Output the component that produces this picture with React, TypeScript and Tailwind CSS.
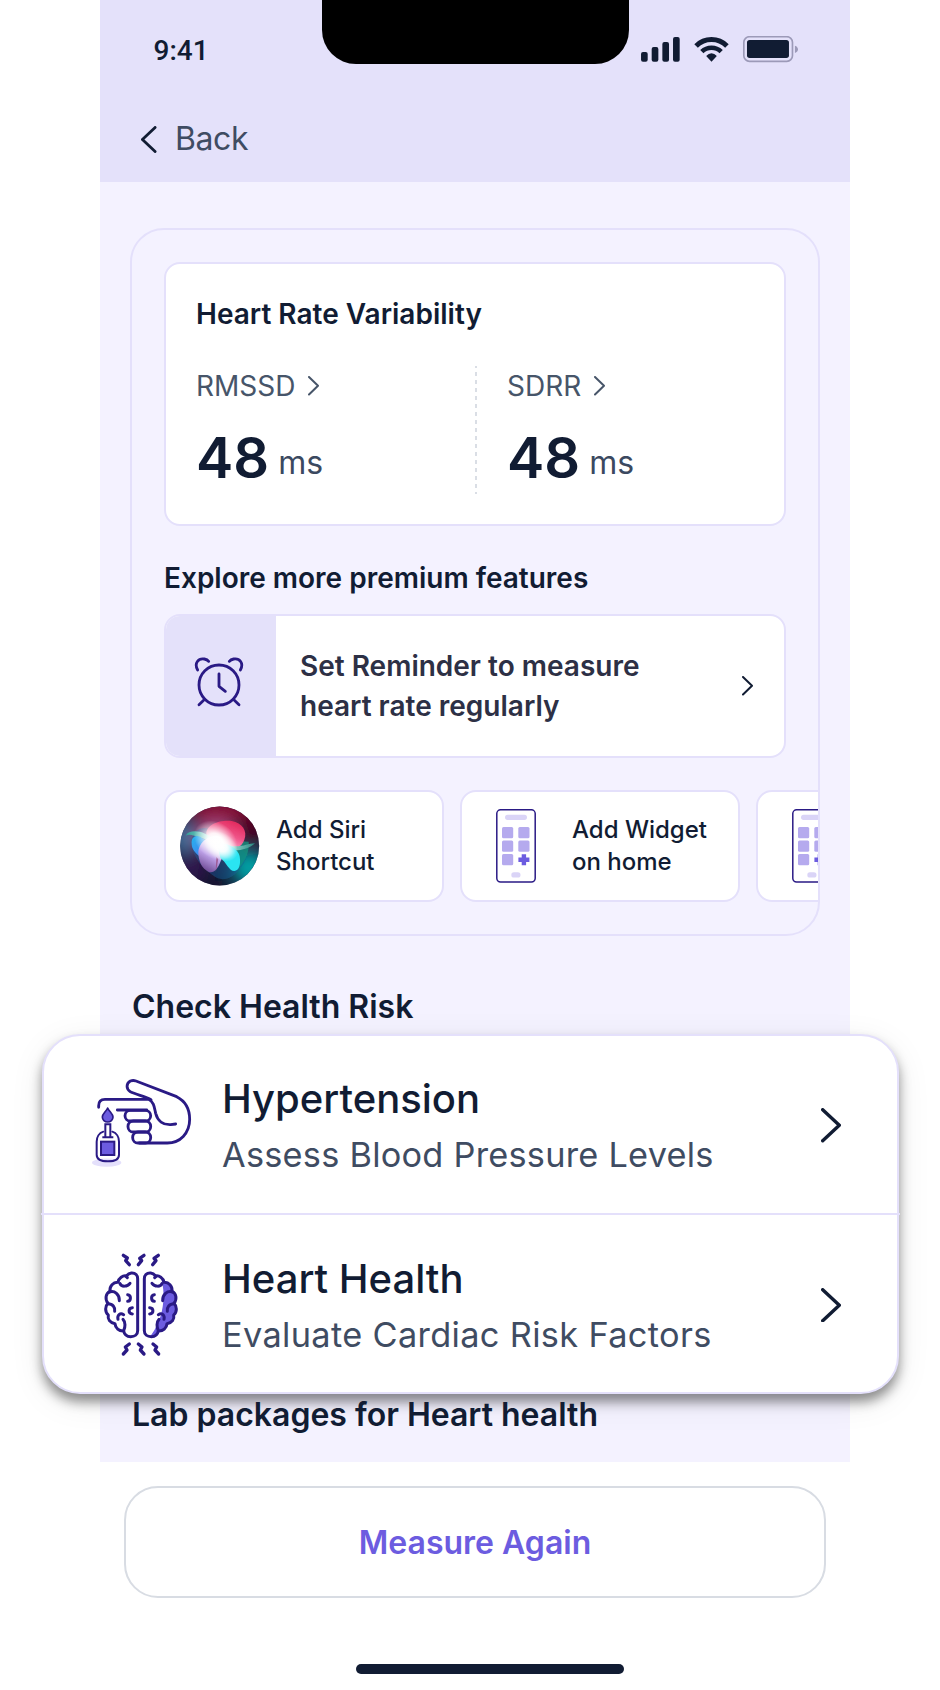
import React from "react";

const INK = "#111c33";
const INDIGO = "#2a1a85";
const VIOLET = "#6c5ce0";

function StatusIcons() {
  return (
    <svg width="157.33" height="26.67" viewBox="423 108 472 80" className="mt-9 ml-[11.5px] shrink-0">
      <g fill={INK}>
        <rect x="423" y="156" width="20" height="29" rx="6" />
        <rect x="455" y="141" width="20" height="44" rx="6" />
        <rect x="487" y="126" width="20" height="59" rx="6" />
        <rect x="519" y="111" width="20" height="74" rx="6" />
        <path d="M634.5 185 L618.5 168 Q626 160 634.5 160 Q643 160 650.5 168 Z" />
        <rect x="741" y="120" width="126" height="54" rx="8" />
      </g>
      <g fill="none" stroke={INK}>
        <path d="M588.2 137.7 A65.5 65.5 0 0 1 680.8 137.7" strokeWidth="15" />
        <path d="M605.5 155 A41.5 41.5 0 0 1 663.5 155" strokeWidth="14" />
      </g>
      <rect x="731.5" y="110" width="146" height="74" rx="17" fill="none" stroke="#9c9ab8" strokeWidth="5" />
      <path d="M885 137 Q894 140 894 148 Q894 156 885 159 Z" fill="#9c9ab8" />
    </svg>
  );
}

function Chevron({ w, h, stroke, color, left = false }: { w: number; h: number; stroke: number; color: string; left?: boolean }) {
  const p = stroke / 2;
  const d = left ? `M${w - p} ${p} L${p} ${h / 2} L${w - p} ${h - p}` : `M${p} ${p} L${w - p} ${h / 2} L${p} ${h - p}`;
  return (
    <svg width={w} height={h} viewBox={`0 0 ${w} ${h}`} fill="none" className="shrink-0">
      <path d={d} stroke={color} strokeWidth={stroke} strokeLinecap="round" strokeLinejoin="round" />
    </svg>
  );
}

function AlarmIcon() {
  return (
    <svg width="60" height="60" viewBox="117 279 180 180" fill="none" stroke={INDIGO} strokeWidth="8.5" strokeLinecap="round" strokeLinejoin="round">
      <circle cx="207" cy="378" r="60" />
      <path d="M207 345 V382 L226 397" />
      <path d="M143 333 C131 312 146 297 163 300 Q172 302 176 307" />
      <path d="M271 333 C283 312 268 297 251 300 Q242 302 238 307" />
      <path d="M164 421 L147 437 M250 421 L267 437" />
    </svg>
  );
}

function SiriOrb() {
  return (
    <svg width="80" height="80" viewBox="59 77 240 240" className="shrink-0">
      <defs>
        <clipPath id="orb"><circle cx="178" cy="197" r="118.5" /></clipPath>
        <filter id="soft" x="-60%" y="-60%" width="220%" height="220%"><feGaussianBlur stdDeviation="22" /></filter>
        <filter id="edge" x="-20%" y="-20%" width="140%" height="140%"><feGaussianBlur stdDeviation="1.5" /></filter>
        <radialGradient id="glow">
          <stop offset="0" stopColor="#fff" />
          <stop offset="0.35" stopColor="#fff" stopOpacity="0.9" />
          <stop offset="1" stopColor="#fff" stopOpacity="0" />
        </radialGradient>
        <linearGradient id="pink" x1="0.8" y1="0" x2="0.2" y2="1">
          <stop offset="0" stopColor="#e02458" />
          <stop offset="0.45" stopColor="#f0568a" />
          <stop offset="1" stopColor="#ffd9f2" />
        </linearGradient>
        <linearGradient id="blue" x1="0" y1="0" x2="1" y2="1">
          <stop offset="0" stopColor="#25b4ee" />
          <stop offset="0.5" stopColor="#3d8cf0" />
          <stop offset="1" stopColor="#1d4f8f" />
        </linearGradient>
        <linearGradient id="teal" x1="0" y1="0" x2="1" y2="0">
          <stop offset="0" stopColor="#2e9c95" />
          <stop offset="0.5" stopColor="#c8fff4" />
          <stop offset="1" stopColor="#27877f" />
        </linearGradient>
        <linearGradient id="lilac" x1="0.7" y1="0" x2="0.3" y2="1">
          <stop offset="0" stopColor="#fff" />
          <stop offset="0.55" stopColor="#c0a4ea" />
          <stop offset="1" stopColor="#6a4590" />
        </linearGradient>
      </defs>
      <g clipPath="url(#orb)">
        <rect x="59" y="77" width="240" height="240" fill="#1c1638" />
        <g filter="url(#soft)">
          <ellipse cx="180" cy="92" rx="100" ry="38" fill="#8a0c34" />
          <ellipse cx="275" cy="140" rx="34" ry="46" fill="#52051c" />
          <ellipse cx="72" cy="172" rx="34" ry="52" fill="#44729c" />
          <ellipse cx="92" cy="260" rx="40" ry="45" fill="#30154f" />
          <ellipse cx="266" cy="262" rx="50" ry="52" fill="#02a3a6" />
          <ellipse cx="160" cy="312" rx="50" ry="20" fill="#07142c" />
          <ellipse cx="165" cy="165" rx="64" ry="50" fill="#9c4a80" />
        </g>
        <g filter="url(#edge)">
          <path d="M94 188 C92 150 130 132 152 150 L240 205 C262 214 262 240 240 262 C222 290 196 302 172 294 C130 270 96 230 94 188 Z" fill="#1b5f9a" opacity="0.45" />
          <path d="M226 270 C254 250 268 212 265 184 L180 180 Z" fill="#139880" opacity="0.7" />
          <path d="M138 160 C138 132 180 118 214 122 C246 128 262 152 252 178 C244 204 214 212 180 208 C154 202 138 184 138 160 Z" fill="url(#pink)" />
          <path d="M76 166 C84 150 112 150 134 160 C170 176 190 198 226 198 C250 198 266 190 284 189 C268 206 232 214 206 209 C170 204 150 178 120 172 C100 166 88 160 76 166 Z" fill="url(#teal)" />
          <path d="M94 190 C92 168 110 160 126 174 L190 210 C180 240 140 240 124 232 C106 220 94 206 94 190 Z" fill="url(#blue)" />
          <path d="M114 216 C114 190 140 166 170 166 C200 172 192 220 182 240 C172 270 158 280 144 274 C126 266 114 244 114 216 Z" fill="url(#lilac)" />
          <path d="M170 190 C200 184 234 206 238 228 C242 252 236 272 222 272 C206 272 198 246 180 232 Z" fill="#2ae4f2" />
          <path d="M168 230 L174 236 L166 276 Z" fill="#96467c" opacity="0.7" />
        </g>
        <ellipse cx="166" cy="180" rx="70" ry="54" fill="url(#glow)" transform="rotate(35 166 180)" />
        <ellipse cx="182" cy="198" rx="56" ry="40" fill="url(#glow)" transform="rotate(35 182 198)" />
      </g>
    </svg>
  );
}

function WidgetIcon() {
  return (
    <svg width="40" height="74" viewBox="0 0 40 74" className="shrink-0">
      <rect x="0.8" y="0.8" width="38.4" height="72.2" rx="3.8" fill="#fff" stroke={INDIGO} strokeWidth="1.5" />
      <rect x="9" y="5.7" width="22" height="5.2" rx="2.6" fill="#dad4f7" />
      <g fill="#b5aaee">
        <rect x="6" y="18" width="11.2" height="11.2" rx="1.5" />
        <rect x="22.3" y="18" width="11.2" height="11.2" rx="1.5" />
        <rect x="6" y="31.6" width="11.2" height="11.2" rx="1.5" />
        <rect x="22.3" y="31.6" width="11.2" height="11.2" rx="1.5" />
        <rect x="6" y="45" width="11.2" height="11.2" rx="1.5" />
      </g>
      <path d="M27.9 45.2 V56.2 M22.4 50.7 H33.4" stroke={VIOLET} strokeWidth="4.4" />
      <rect x="15.3" y="63.3" width="9.2" height="5.3" rx="2.6" fill="#dad4f7" />
    </svg>
  );
}

function BloodTestIcon() {
  return (
    <svg width="130" height="120" viewBox="0 0 390 360" className="mt-6 shrink-0" fill="none" stroke={INDIGO} strokeWidth="8.5" strokeLinecap="round" strokeLinejoin="round">
      <ellipse cx="80" cy="308" rx="44" ry="12.5" fill="#e4e0fb" stroke="none" />
      <path d="M213 119 C198 110 170 104 151 95 C138 88 138 70 151 63 C157 61 162 61 168 63 L290 110 C316 123 329 147 329 178 C329 220 300 249 262 249 H178" />
      <path d="M56 142 V137 C56 123 63 118 75 118 H206 C222 126 223 142 227 160 C233 183 250 195 272 194 L287 192" />
      <path d="M112 150 H200" />
      <rect x="135" y="151" width="77" height="32" rx="16" />
      <rect x="144" y="183" width="68" height="33" rx="16" />
      <rect x="158" y="216" width="54" height="33" rx="16" />
      <path d="M83 144 C78 155 67 162 67 171 A16 15 0 0 0 99 171 C99 162 88 155 83 144 Z" fill={VIOLET} strokeWidth="5" />
      <path d="M70 215 C57 219 50 232 50 245 V284 C50 298 64 304 84 304 C104 304 117 298 117 284 V245 C117 232 110 219 97 215" strokeWidth="6" />
      <path d="M76 231 V193 H91 V231 M67 232 H100" strokeWidth="6" strokeLinecap="butt" strokeLinejoin="miter" />
      <rect x="63" y="245" width="40" height="40" fill={VIOLET} strokeWidth="6" strokeLinejoin="miter" />
    </svg>
  );
}

const LOBE =
  "M124 99 C137 98 143 107 143 116 V272 C143 284 134 290 122 290 C110 290 103 283 101 273 C87 274 76 265 75 251 C60 249 52 238 55 225 C44 215 45 198 54 190 C44 178 47 160 60 154 C58 138 70 126 84 127 C86 113 99 106 109 108 Q116 100 124 99 Z";

function LobeFolds() {
  return (
    <>
      <path d="M58 156 C74 150 89 164 88 182" />
      <path d="M54 191 C68 191 76 202 74 214" />
      <path d="M84 238 C81 226 90 217 101 224" />
      <path d="M99 238 C107 246 106 262 101 272" />
      <path d="M90 131 C94 141 112 141 120 130" />
      <path d="M108 109 L112 113" />
      <path d="M113 164 C124 165 124 183 113 184" />
      <path d="M127 203 C114 204 114 221 127 222" />
    </>
  );
}

function BrainIcon() {
  return (
    <svg width="100" height="130" viewBox="0 0 300 390" className="mt-[25px] mr-5 ml-2.5 shrink-0" fill="none" stroke={INDIGO} strokeWidth="9" strokeLinecap="round" strokeLinejoin="round">
      <defs>
        <clipPath id="lobe"><path d={LOBE} transform="translate(306 0) scale(-1 1)" /></clipPath>
      </defs>
      <path d="M206 95 C220 125 224 165 218 200 C212 240 196 270 176 295 H275 V95 Z" fill={VIOLET} stroke="none" clipPath="url(#lobe)" />
      <path d={LOBE} />
      <LobeFolds />
      <g transform="translate(306 0) scale(-1 1)">
        <path d={LOBE} />
        <LobeFolds />
      </g>
      <g strokeWidth="10">
        <path d="M100 46 L112 54 L107 62 L118 74" />
        <path d="M162 46 L149 55 L155 62 L145 74" />
        <path d="M205 46 L192 55 L198 62 L188 74" />
        <path d="M118 312 L106 321 L111 330 L100 342" />
        <path d="M145 312 L156 321 L151 330 L162 342" />
        <path d="M189 312 L200 321 L195 330 L206 342" />
      </g>
    </svg>
  );
}

function Metric({ label, value }: { label: string; value: string }) {
  return (
    <div>
      <div className="flex h-10 items-center text-[28px] leading-10 text-[#475569]">
        <span>{label}</span>
        <span className="ml-[13px]"><Chevron w={11} h={19.5} stroke={2} color="#475569" /></span>
      </div>
      <div className="mt-[19.5px] flex items-start">
        <span className="text-[56px] leading-[64px] font-semibold text-[#111c33]">{value}</span>
        <span className="mt-[17px] ml-[9px] text-[32px] leading-10 text-[#3b4960]">ms</span>
      </div>
    </div>
  );
}

function FeatureCard({ icon, lines }: { icon: React.ReactNode; lines?: [string, string] }) {
  return (
    <div className="flex h-28 w-[280px] shrink-0 items-center rounded-2xl border-2 border-[#e4e0fb] bg-white pl-[14px]">
      <div className="flex w-20 shrink-0 justify-center">{icon}</div>
      {lines && (
        <div className="ml-4 text-2xl leading-8 font-medium whitespace-nowrap text-[#111c33]">
          <div>{lines[0]}</div>
          <div>{lines[1]}</div>
        </div>
      )}
    </div>
  );
}

export default function App() {
  return (
    <div className="h-[1690px] w-[940px] overflow-hidden bg-white font-['Inter',sans-serif]">
      <div className="ml-[100px] w-[750px]">
        <header className="h-[182px] bg-[#e4e1fa]">
          <div className="flex h-16 items-start">
            <div className="w-[222px] shrink-0 pt-[31px] pl-[53.5px] font-['Roboto',sans-serif] text-[28px] leading-10 font-medium text-[#111c33]">9:41</div>
            <div className="h-16 w-[307px] shrink-0 rounded-b-[34px] bg-black" />
            <StatusIcons />
          </div>
          <div className="flex items-center pt-[55px] pl-[41px] text-[32px] leading-10 tracking-[-0.4px] text-[#3f4c62]">
            <Chevron w={15.5} h={27} stroke={2.8} color={INK} left />
            <span className="ml-[18.5px]">Back</span>
          </div>
        </header>

        <main className="h-[1280px] bg-[#f4f2ff] px-[30px] pt-[46px]">
          <section className="h-[708px] overflow-hidden rounded-[34px] border-2 border-[#e4e0fb] py-8 pl-8">
            <div className="h-[264px] w-[622px] rounded-2xl border-2 border-[#e4e0fb] bg-white pt-8 pl-[30px]">
              <h2 className="text-[28px] leading-9 font-semibold text-[#111c33]">Heart Rate Variability</h2>
              <div className="mt-[34px] flex">
                <div className="w-[279px]"><Metric label="RMSSD" value="48" /></div>
                <svg width="2" height="128" className="mr-[30px] shrink-0">
                  <path d="M1 0 V128" stroke="#dadee5" strokeWidth="2" strokeDasharray="4 4" strokeDashoffset="2" />
                </svg>
                <Metric label="SDRR" value="48" />
              </div>
            </div>

            <h3 className="mt-8 text-[28px] leading-10 font-semibold text-[#111c33]">Explore more premium features</h3>

            <div className="mt-4 flex h-36 w-[622px] overflow-hidden rounded-2xl border-2 border-[#e4e0fb] bg-white">
              <div className="flex w-[110px] shrink-0 items-center justify-center bg-[#e4e1fa] pr-1 pb-2"><AlarmIcon /></div>
              <div className="flex flex-1 items-center justify-between pr-[31.5px] pl-6">
                <p className="text-[28px] leading-10 font-semibold text-[#2d3045]">
                  Set Reminder to measure
                  <br />
                  heart rate regularly
                </p>
                <Chevron w={11} h={19.5} stroke={2} color={INK} />
              </div>
            </div>

            <div className="mt-8 flex gap-4">
              <FeatureCard icon={<SiriOrb />} lines={["Add Siri", "Shortcut"]} />
              <FeatureCard icon={<WidgetIcon />} lines={["Add Widget", "on home"]} />
              <FeatureCard icon={<WidgetIcon />} />
            </div>
          </section>

          <h2 className="mt-[51px] pl-0.5 text-[32px] leading-10 font-semibold text-[#111c33]">Check Health Risk</h2>

          <div className="mt-[7px] -ml-[88px] h-[360px] w-[857px] rounded-[38px] border-2 border-[#e4e0fb] bg-white shadow-[0_8px_12px_rgba(0,0,0,0.42),0_8px_34px_rgba(0,0,0,0.08)]">
            <div className="flex h-[177px] items-start pl-9">
              <BloodTestIcon />
              <div className="ml-3 pt-[39px]">
                <div className="text-[40px] leading-[48px] font-medium text-[#111c33]">Hypertension</div>
                <div className="mt-[11px] text-[34.3px] leading-[42px] tracking-[0.25px] whitespace-nowrap text-[#3f4c62]">Assess Blood Pressure Levels</div>
              </div>
              <div className="mr-[56px] ml-auto flex h-full items-center pt-0.5"><Chevron w={20} h={34.5} stroke={3.4} color={INK} /></div>
            </div>
            <div className="-mx-[3px] h-0.5 bg-[#e4e0fb]" />
            <div className="flex h-[177px] items-start pl-9">
              <BrainIcon />
              <div className="ml-3 pt-10">
                <div className="text-[40px] leading-[48px] font-medium text-[#111c33]">Heart Health</div>
                <div className="mt-[11px] text-[34.3px] leading-[42px] tracking-[0.35px] whitespace-nowrap text-[#3f4c62]">Evaluate Cardiac Risk Factors</div>
              </div>
              <div className="mr-[56px] ml-auto flex h-full items-center pt-[3px]"><Chevron w={20} h={34.5} stroke={3.4} color={INK} /></div>
            </div>
          </div>

          <h2 className="relative pt-px pl-0.5 text-[32px] leading-10 font-semibold text-[#111c33]">Lab packages for Heart health</h2>
        </main>

        <footer className="flex flex-col pt-6">
          <button className="ml-6 h-28 w-[702px] rounded-[34px] border-2 border-[#d8dce3] bg-white pt-0.5 text-[32px] leading-10 font-semibold text-[#6c5ce0]">Measure Again</button>
          <div className="mt-[66px] ml-64 h-2.5 w-[268px] rounded-full bg-[#111c33]" />
        </footer>
      </div>
    </div>
  );
}
